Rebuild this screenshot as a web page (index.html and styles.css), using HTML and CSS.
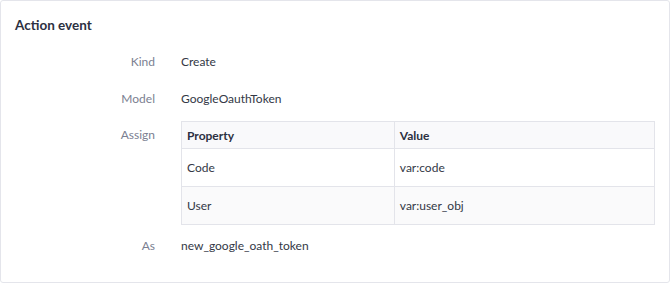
FILE: index.html
```html
<!DOCTYPE html>
<html lang="en">
<head>
  <meta charset="UTF-8" />
  <title>Action event</title>
  <link rel="stylesheet" href="styles.css">
</head>
<body>
  <div class="card">
    <h3 class="card-title">Action event</h3>

    <dl class="details">
      <dt>Kind</dt>
      <dd>Create</dd>

      <dt>Model</dt>
      <dd>GoogleOauthToken</dd>

      <dt class="assign-label">Assign</dt>
      <dd class="assign-value">
        <table class="assign-table">
          <thead>
            <tr>
              <th>Property</th>
              <th>Value</th>
            </tr>
          </thead>
          <tbody>
            <tr>
              <td>Code</td>
              <td>var:code</td>
            </tr>
            <tr>
              <td>User</td>
              <td>var:user_obj</td>
            </tr>
          </tbody>
        </table>
      </dd>

      <dt>As</dt>
      <dd>new_google_oath_token</dd>
    </dl>
  </div>
</body>
</html>
```

FILE: styles.css
```css
* {
  box-sizing: border-box;
}

body {
  margin: 0;
  font-family: Lato, "Open Sans", sans-serif;
  font-size: 12px;
  color: #353a48;
  background: #fff;
}

.card {
  width: 670px;
  border: 1px solid #e4e5eb;
  border-radius: 3px;
  padding: 14px 14px 18px;
  background: #fff;
}

.card-title {
  margin: 0 0 8px;
  font-size: 13.5px;
  line-height: 20px;
  font-weight: 700;
  color: #2c3041;
}

.details {
  display: grid;
  grid-template-columns: 140px 1fr;
  column-gap: 26px;
  margin: 0;
}

.details dt,
.details dd {
  margin: 0;
  padding: 8px 0;
  line-height: 21px;
}

.details dt {
  text-align: right;
  color: #7b8091;
}

.details dd {
  color: #333846;
}

.details .assign-label {
  padding-top: 7px;
}

.details .assign-value {
  padding: 4px 0 2px;
}

.assign-table {
  width: 100%;
  border-collapse: collapse;
  border: 1px solid #e3e4ea;
}

.assign-table th,
.assign-table td {
  text-align: left;
  border: 1px solid #e3e4ea;
  padding: 8px 5px;
  line-height: 21px;
}

.assign-table th {
  padding: 3px 5px 2px;
  font-weight: 700;
  color: #2c3041;
  background: #f9f9fb;
}

.assign-table th:first-child {
  width: 45%;
}

.assign-table tbody tr:nth-child(even) td {
  background: #fafafb;
}
```
